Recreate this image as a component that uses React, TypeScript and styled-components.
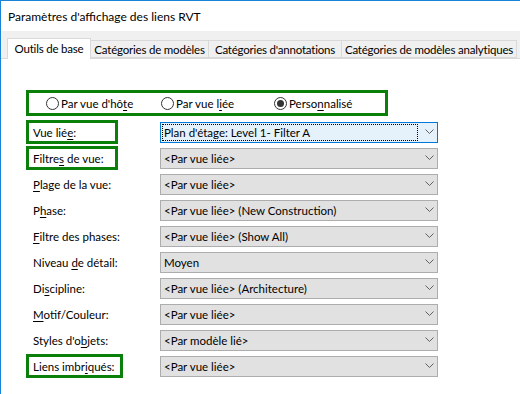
import React from 'react';
import styled, { createGlobalStyle } from 'styled-components';

const GlobalStyle = createGlobalStyle`
  html, body {
    margin: 0;
    padding: 0;
    background: #ffffff;
  }
  body {
    font-family: Lato, 'Noto Sans', sans-serif;
    font-size: 11.5px;
    color: #000000;
  }
`;

const GREEN = '#0a7f0a';

const Window = styled.div`
  width: 520px;
  height: 394px;
  box-sizing: border-box;
  border-left: 1px solid #1883d7;
  border-top: 1px solid #1883d7;
  display: flex;
  flex-direction: column;
  overflow: hidden;
  background: #ffffff;
`;

const TitleBar = styled.div`
  height: 30px;
  padding-left: 7px;
  display: flex;
  align-items: center;
  font-size: 12px;
  background: #ffffff;
`;

const TabStrip = styled.div`
  height: 28px;
  box-sizing: border-box;
  background: #f0f0f0;
  border-bottom: 1px solid #d9d9d9;
  padding-left: 6px;
  display: flex;
  align-items: flex-end;
  white-space: nowrap;
`;

const Tab = styled.div<{ $active?: boolean; $width: number }>`
  width: ${(p) => p.$width}px;
  height: ${(p) => (p.$active ? 21 : 18)}px;
  margin-bottom: ${(p) => (p.$active ? -1 : 0)}px;
  box-sizing: border-box;
  flex-shrink: 0;
  border: 1px solid #d9d9d9;
  border-bottom: ${(p) => (p.$active ? 'none' : '1px solid #d9d9d9')};
  border-left: ${(p) => (p.$active ? '1px solid #d9d9d9' : 'none')};
  background: ${(p) => (p.$active ? '#ffffff' : '#f0f0f0')};
  display: flex;
  align-items: center;
  justify-content: center;
  padding-bottom: ${(p) => (p.$active ? 2 : 0)}px;
  font-size: 11.5px;
  letter-spacing: -0.2px;
`;

const Panel = styled.div`
  flex: 1;
  padding: 31px 0 0 25px;
  background: #ffffff;
`;

const RadioBox = styled.div`
  width: 362px;
  height: 26px;
  box-sizing: border-box;
  border: 3px solid ${GREEN};
  padding-left: 17px;
  display: flex;
  align-items: center;
`;

const RadioItem = styled.label<{ $width?: number }>`
  display: flex;
  align-items: center;
  gap: 2px;
  width: ${(p) => (p.$width ? `${p.$width}px` : 'auto')};
  white-space: nowrap;
`;

const RadioCircle = styled.span<{ $checked?: boolean }>`
  width: 13px;
  height: 13px;
  box-sizing: border-box;
  border: 1px solid #333333;
  border-radius: 50%;
  background: #ffffff;
  display: flex;
  align-items: center;
  justify-content: center;
  flex-shrink: 0;
  &::after {
    content: '';
    display: ${(p) => (p.$checked ? 'block' : 'none')};
    width: 7px;
    height: 7px;
    border-radius: 50%;
    background: #333333;
  }
`;

const Form = styled.div`
  margin-top: 3px;
  display: grid;
  grid-template-columns: 134px 278px;
  grid-auto-rows: 26px;
  align-items: center;
`;

const FieldLabel = styled.div<{ $boxed?: boolean; $width?: number }>`
  width: ${(p) => p.$width ?? 92}px;
  height: 24px;
  box-sizing: border-box;
  border: 3px solid ${(p) => (p.$boxed ? GREEN : 'transparent')};
  padding-left: 4px;
  display: flex;
  align-items: center;
  white-space: nowrap;
`;

const Key = styled.span`
  text-decoration: underline;
  text-underline-offset: 2px;
`;

const Select = styled.div<{ $focused?: boolean }>`
  height: 21px;
  box-sizing: border-box;
  border: 1px solid ${(p) => (p.$focused ? '#0078d7' : '#adadad')};
  background: ${(p) => (p.$focused ? '#e5f1fb' : '#e1e1e1')};
  display: flex;
  align-items: stretch;
`;

const SelectValue = styled.div<{ $focused?: boolean }>`
  flex: 1;
  margin: 1px 0 1px 1px;
  border: 1px dotted ${(p) => (p.$focused ? '#000000' : 'transparent')};
  padding-left: 1px;
  display: flex;
  align-items: center;
  white-space: nowrap;
  overflow: hidden;
`;

const SelectArrow = styled.div`
  width: 19px;
  box-sizing: border-box;
  padding-right: 3px;
  display: flex;
  align-items: center;
  justify-content: flex-end;
`;

const Chevron = () => (
  <svg width="9" height="6" viewBox="0 0 9 6">
    <polyline points="0.5,0.5 4.5,4.5 8.5,0.5" fill="none" stroke="#606060" strokeWidth="1" />
  </svg>
);

type Row = {
  label: React.ReactNode;
  value: string;
  boxed?: boolean;
  boxWidth?: number;
  focused?: boolean;
};

const rows: Row[] = [
  { label: <>Vue lié<Key>e</Key>:</>, value: "Plan d'étage: Level 1- Filter A", boxed: true, focused: true },
  { label: <>Filtre<Key>s</Key> de vue:</>, value: '<Par vue liée>', boxed: true },
  { label: <><Key>P</Key>lage de la vue:</>, value: '<Par vue liée>' },
  { label: <>P<Key>h</Key>ase:</>, value: '<Par vue liée> (New Construction)' },
  { label: <><Key>F</Key>iltre des phases:</>, value: '<Par vue liée> (Show All)' },
  { label: <>Niveau <Key>d</Key>e détail:</>, value: 'Moyen' },
  { label: <>Di<Key>s</Key>cipline:</>, value: '<Par vue liée> (Architecture)' },
  { label: <><Key>M</Key>otif/Couleur:</>, value: '<Par vue liée>' },
  { label: <>Styles d'o<Key>b</Key>jets:</>, value: '<Par modèle lié>' },
  { label: <>Liens imbr<Key>i</Key>qués:</>, value: '<Par vue liée>', boxed: true, boxWidth: 97 },
];

const tabs = [
  { name: 'Outils de base', width: 84, active: true },
  { name: 'Catégories de modèles', width: 118 },
  { name: "Catégories d'annotations", width: 133 },
  { name: 'Catégories de modèles analytiques', width: 175 },
];

const App = () => {
  return (
    <>
      <GlobalStyle />
      <Window>
        <TitleBar>Paramètres d'affichage des liens RVT</TitleBar>
        <TabStrip>
          {tabs.map((t) => (
            <Tab key={t.name} $active={t.active} $width={t.width}>
              {t.name}
            </Tab>
          ))}
        </TabStrip>
        <Panel>
          <RadioBox>
            <RadioItem $width={115}>
              <RadioCircle />
              <span>
                Par vue d'hô<Key>t</Key>e
              </span>
            </RadioItem>
            <RadioItem $width={113}>
              <RadioCircle />
              <span>
                Par vue l<Key>i</Key>ée
              </span>
            </RadioItem>
            <RadioItem>
              <RadioCircle $checked />
              <span>
                Perso<Key>n</Key>nalisé
              </span>
            </RadioItem>
          </RadioBox>
          <Form>
            {rows.map((r, i) => (
              <React.Fragment key={i}>
                <FieldLabel $boxed={r.boxed} $width={r.boxWidth}>
                  <span>{r.label}</span>
                </FieldLabel>
                <Select $focused={r.focused}>
                  <SelectValue $focused={r.focused}>{r.value}</SelectValue>
                  <SelectArrow>
                    <Chevron />
                  </SelectArrow>
                </Select>
              </React.Fragment>
            ))}
          </Form>
        </Panel>
      </Window>
    </>
  );
};

export default App;
